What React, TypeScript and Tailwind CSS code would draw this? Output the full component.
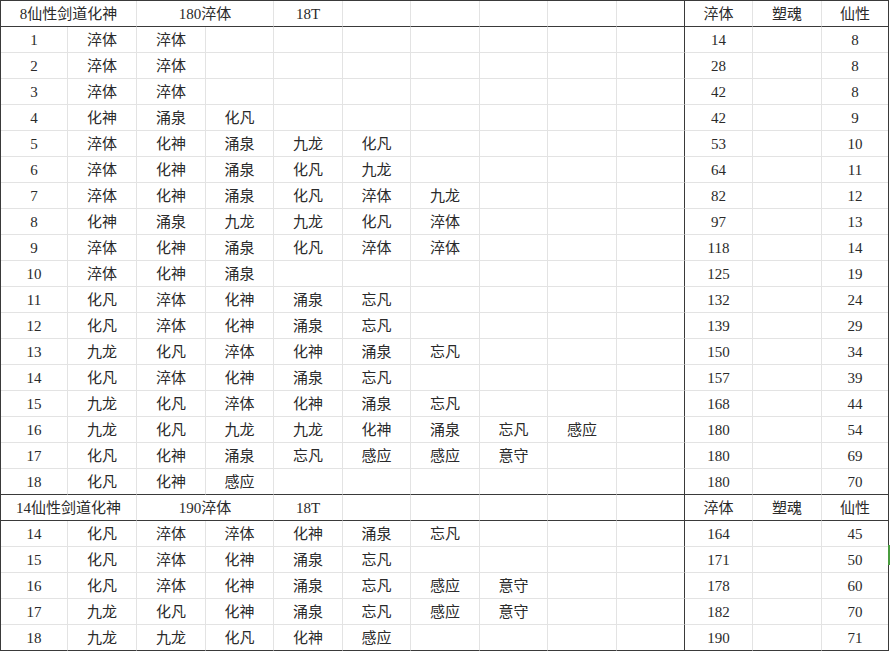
import React from "react";

const COLS =
  "grid grid-cols-[67px_69px_69px_68px_69px_68px_69px_68px_69px_68px_68px_69px_66px]";

type Row = { n: string; items: string[]; cui: string; xian: string };

const sec1: Row[] = [
  { n: "1", items: ["淬体", "淬体"], cui: "14", xian: "8" },
  { n: "2", items: ["淬体", "淬体"], cui: "28", xian: "8" },
  { n: "3", items: ["淬体", "淬体"], cui: "42", xian: "8" },
  { n: "4", items: ["化神", "涌泉", "化凡"], cui: "42", xian: "9" },
  { n: "5", items: ["淬体", "化神", "涌泉", "九龙", "化凡"], cui: "53", xian: "10" },
  { n: "6", items: ["淬体", "化神", "涌泉", "化凡", "九龙"], cui: "64", xian: "11" },
  { n: "7", items: ["淬体", "化神", "涌泉", "化凡", "淬体", "九龙"], cui: "82", xian: "12" },
  { n: "8", items: ["化神", "涌泉", "九龙", "九龙", "化凡", "淬体"], cui: "97", xian: "13" },
  { n: "9", items: ["淬体", "化神", "涌泉", "化凡", "淬体", "淬体"], cui: "118", xian: "14" },
  { n: "10", items: ["淬体", "化神", "涌泉"], cui: "125", xian: "19" },
  { n: "11", items: ["化凡", "淬体", "化神", "涌泉", "忘凡"], cui: "132", xian: "24" },
  { n: "12", items: ["化凡", "淬体", "化神", "涌泉", "忘凡"], cui: "139", xian: "29" },
  { n: "13", items: ["九龙", "化凡", "淬体", "化神", "涌泉", "忘凡"], cui: "150", xian: "34" },
  { n: "14", items: ["化凡", "淬体", "化神", "涌泉", "忘凡"], cui: "157", xian: "39" },
  { n: "15", items: ["九龙", "化凡", "淬体", "化神", "涌泉", "忘凡"], cui: "168", xian: "44" },
  { n: "16", items: ["九龙", "化凡", "九龙", "九龙", "化神", "涌泉", "忘凡", "感应"], cui: "180", xian: "54" },
  { n: "17", items: ["化凡", "化神", "涌泉", "忘凡", "感应", "感应", "意守"], cui: "180", xian: "69" },
  { n: "18", items: ["化凡", "化神", "感应"], cui: "180", xian: "70" },
];

const sec2: Row[] = [
  { n: "14", items: ["化凡", "淬体", "淬体", "化神", "涌泉", "忘凡"], cui: "164", xian: "45" },
  { n: "15", items: ["化凡", "淬体", "化神", "涌泉", "忘凡"], cui: "171", xian: "50" },
  { n: "16", items: ["化凡", "淬体", "化神", "涌泉", "忘凡", "感应", "意守"], cui: "178", xian: "60" },
  { n: "17", items: ["九龙", "化凡", "化神", "涌泉", "忘凡", "感应", "意守"], cui: "182", xian: "70" },
  { n: "18", items: ["九龙", "九龙", "化凡", "化神", "感应"], cui: "190", xian: "71" },
];

function Cell({
  children,
  dark,
  bottomDark,
  last,
  span2,
}: {
  children?: React.ReactNode;
  dark?: boolean;
  bottomDark?: boolean;
  last?: boolean;
  span2?: boolean;
}) {
  return (
    <div
      className={[
        "h-[26px] pt-[2px] flex items-center justify-center whitespace-nowrap border-b",
        span2 ? "col-span-2" : "",
        last ? "" : "border-r",
        dark ? "border-r-[#3a3a3a]" : "border-r-[#e3e3e3]",
        bottomDark ? "border-b-[#3a3a3a]" : "border-b-[#e3e3e3]",
      ].join(" ")}
    >
      {children}
    </div>
  );
}

function Header({ title, cui }: { title: string; cui: string }) {
  return (
    <div className={COLS}>
      <Cell span2 bottomDark>{title}</Cell>
      <Cell span2 bottomDark>{cui}</Cell>
      <Cell bottomDark>18T</Cell>
      <Cell bottomDark />
      <Cell bottomDark />
      <Cell bottomDark />
      <Cell bottomDark />
      <Cell bottomDark dark />
      <Cell bottomDark>淬体</Cell>
      <Cell bottomDark>塑魂</Cell>
      <Cell bottomDark last>仙性</Cell>
    </div>
  );
}

function DataRow({ row, bottomDark }: { row: Row; bottomDark?: boolean }) {
  const items = Array.from({ length: 9 }, (_, i) => row.items[i] ?? "");
  return (
    <div className={COLS}>
      <Cell bottomDark={bottomDark}>{row.n}</Cell>
      {items.map((it, i) => (
        <Cell key={i} bottomDark={bottomDark} dark={i === 8}>
          {it}
        </Cell>
      ))}
      <Cell bottomDark={bottomDark}>{row.cui}</Cell>
      <Cell bottomDark={bottomDark} />
      <Cell bottomDark={bottomDark} last>
        {row.xian}
      </Cell>
    </div>
  );
}

export default function App() {
  return (
    <div className="w-[890px] h-[651px] bg-white overflow-hidden">
      <div
        className="relative w-[889px] border-t border-l border-r border-[#3a3a3a] text-[15px] text-[#2a2a2a]"
        style={{ fontFamily: '"Liberation Serif", "Noto Sans CJK SC", serif' }}
      >
        <Header title="8仙性剑道化神" cui="180淬体" />
        {sec1.map((r, i) => (
          <DataRow key={"a" + i} row={r} bottomDark={i === sec1.length - 1} />
        ))}
        <Header title="14仙性剑道化神" cui="190淬体" />
        {sec2.map((r, i) => (
          <DataRow key={"b" + i} row={r} bottomDark={i === sec2.length - 1} />
        ))}
        <div className="absolute left-[887px] top-[544px] w-[2px] h-[20px] bg-[#4a9d3f]" />
      </div>
    </div>
  );
}
